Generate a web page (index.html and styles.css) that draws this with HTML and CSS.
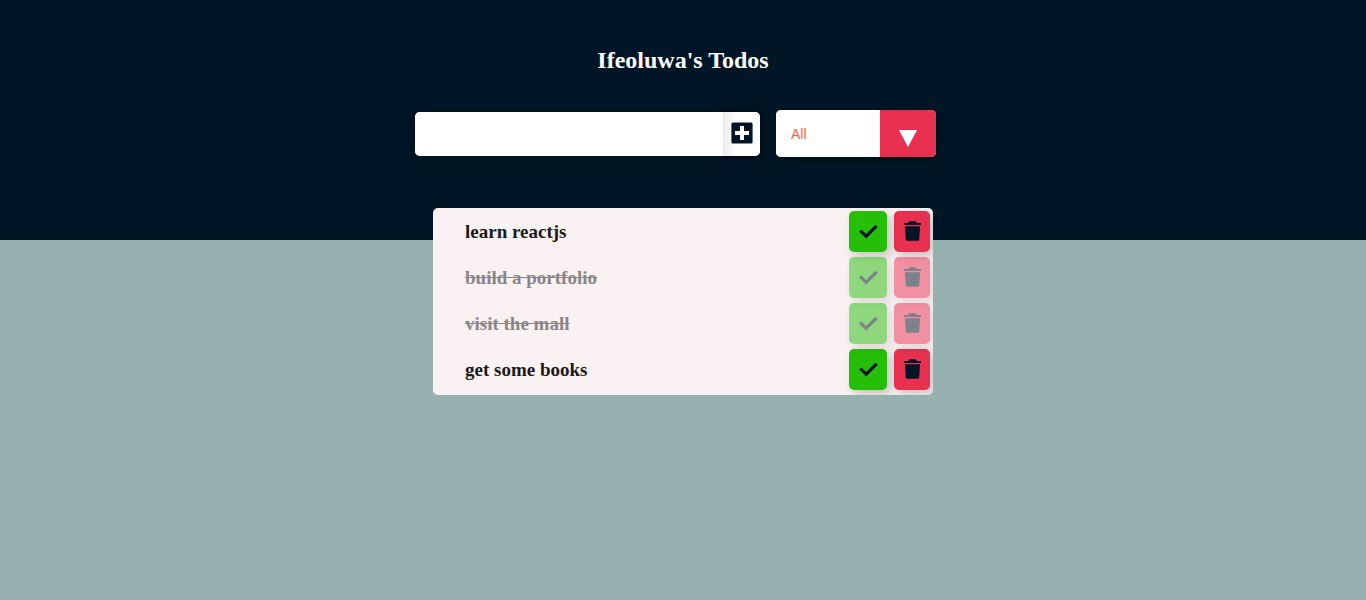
FILE: index.html
```html
<!DOCTYPE html>
<html lang="en">
<head>
<meta charset="utf-8">
<title>Ifeoluwa's Todos</title>
<link rel="stylesheet" href="styles.css">
</head>
<body>
<svg class="symbols" aria-hidden="true">
  <symbol id="check" viewBox="0 0 19 15"><path d="M0 7.600L2.300 5.400 7.100 10 16.400.8l2.400 2.300L7.200 14.600z"/></symbol>
  <symbol id="trash" viewBox="0 0 17 20"><path d="M0 2h4.300L5 .6Q5.300.2 6 .2h5q.7 0 1 .4l.7 1.400H17v2H0zM.9 5.300h15.200l-.9 13.200q-.1 1.300-1.400 1.300H3.200q-1.300 0-1.400-1.300z"/></symbol>
  <symbol id="plus" viewBox="0 0 22 22"><path fill-rule="evenodd" d="M2 .4h18a1.600 1.600 0 0 1 1.600 1.600v18a1.600 1.600 0 0 1-1.600 1.600H2A1.600 1.600 0 0 1 .4 20V2A1.600 1.600 0 0 1 2 .4zM9 4v5H4v4h5v5h4v-5h5V9h-5V4z"/></symbol>
</svg>
<header class="header"><h1 class="title">Ifeoluwa's Todos</h1></header>
<form class="form">
  <div class="entry">
    <input class="entry-input" type="text" aria-label="New todo">
    <button class="entry-button" type="button" aria-label="Add todo"><svg class="plus-icon"><use href="#plus"/></svg></button>
  </div>
  <div class="filter">
    <select class="filter-select" aria-label="Filter todos">
      <option>All</option><option>Completed</option><option>Uncompleted</option>
    </select>
    <span class="filter-arrow" aria-hidden="true"><svg class="arrow-icon" viewBox="0 0 18 17"><path d="M0 0h18L9 17z"/></svg></span>
  </div>
</form>
<ul class="todos">
  <li class="todo"><span class="todo-text">learn reactjs</span><button class="action check" aria-label="Complete"><svg class="check-icon"><use href="#check"/></svg></button><button class="action trash" aria-label="Delete"><svg class="trash-icon"><use href="#trash"/></svg></button></li>
  <li class="todo done"><span class="todo-text">build a portfolio</span><button class="action check" aria-label="Complete"><svg class="check-icon"><use href="#check"/></svg></button><button class="action trash" aria-label="Delete"><svg class="trash-icon"><use href="#trash"/></svg></button></li>
  <li class="todo done"><span class="todo-text">visit the mall</span><button class="action check" aria-label="Complete"><svg class="check-icon"><use href="#check"/></svg></button><button class="action trash" aria-label="Delete"><svg class="trash-icon"><use href="#trash"/></svg></button></li>
  <li class="todo"><span class="todo-text">get some books</span><button class="action check" aria-label="Complete"><svg class="check-icon"><use href="#check"/></svg></button><button class="action trash" aria-label="Delete"><svg class="trash-icon"><use href="#trash"/></svg></button></li>
</ul>
</body>
</html>
```
FILE: styles.css
```css
* { box-sizing: border-box; margin: 0; padding: 0; }
body {
  min-height: 100vh;
  background: linear-gradient(#001626 40vh, #97b0b0 40vh);
  font-family: "Liberation Serif", "Times New Roman", serif;
}
.symbols { display: none; }
button { border: none; cursor: pointer; }
svg { display: block; fill: #001626; }
.header { padding-top: 46px; text-align: center; }
.title { font-size: 24px; line-height: 28px; color: #fff; }
.form {
  display: flex;
  justify-content: center;
  align-items: center;
  gap: 16px;
  margin: 36px 15px 0 0;
}
.entry { display: flex; width: 345px; height: 44px; border-radius: 5px; background: #fff; box-shadow: 0 0 10px rgba(0, 0, 0, 0.3); }
.entry-input { position: relative; flex: 1; min-width: 0; border: none; border-radius: 5px 0 0 5px; padding: 0 16px; background: #fff; font-size: 18px; }
.entry-button {
  display: grid;
  place-items: center;
  width: 37px;
  padding-bottom: 2px;
  border-radius: 0 5px 5px 0;
  background: linear-gradient(to right, #ebebeb, #fff 12px);
  box-shadow: 2px 2px 10px rgba(0, 0, 0, 0.4);
}
.plus-icon { width: 22px; height: 22px; }
.filter { display: flex; width: 160px; height: 47px; border-radius: 5px; overflow: hidden; background: #fff; box-shadow: 2px 2px 10px rgba(0, 0, 0, 0.4); }
.filter-select {
  appearance: none;
  flex: 1;
  min-width: 0;
  border: none;
  padding: 0 15px;
  background: #fff;
  color: #ff6347;
  font: 14px "Liberation Sans", Arial, sans-serif;
}
.filter-arrow { display: grid; place-items: center; width: 56px; padding-top: 9px; background: #e83151; }
.arrow-icon { width: 18px; height: 17px; fill: #fff; }
.todos {
  display: flex;
  flex-direction: column;
  gap: 5px;
  width: 500px;
  max-width: 100%;
  margin: 51px auto 0;
  padding: 3px 3px 5px 32px;
  border-radius: 5px;
  background: #faf1f2;
  overflow: hidden;
  list-style: none;
}
.todo { display: flex; align-items: center; gap: 7px; color: #1a1a1a; font-size: 19px; font-weight: bold; }
.todo-text { flex: 1; }
.done { opacity: 0.5; }
.done .todo-text { text-decoration: line-through; }
.action { display: grid; place-items: center; height: 41px; padding-bottom: 1px; border-radius: 5px; box-shadow: 4px 4px 10px rgba(0, 0, 0, 0.2); }
.check { width: 38px; background: #26bf08; }
.trash { width: 36px; background: #e83151; }
.check-icon { width: 19px; height: 15px; }
.trash-icon { width: 17px; height: 20px; }
```
